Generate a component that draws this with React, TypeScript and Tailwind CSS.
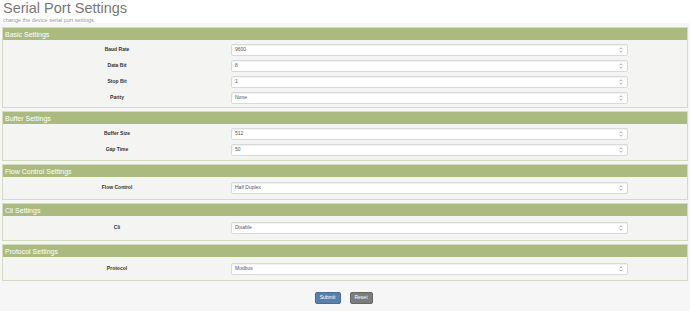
import React from "react";

type Field = { label: string; value: string };
type Section = { title: string; pad: string; fields: Field[] };

const SECTIONS: Section[] = [
  {
    title: "Basic Settings",
    pad: "pt-[4px] pb-[3px]",
    fields: [
      { label: "Baud Rate", value: "9600" },
      { label: "Data Bit", value: "8" },
      { label: "Stop Bit", value: "1" },
      { label: "Parity", value: "None" },
    ],
  },
  {
    title: "Buffer Settings",
    pad: "pt-[4px] pb-[4px]",
    fields: [
      { label: "Buffer Size", value: "512" },
      { label: "Gap Time", value: "50" },
    ],
  },
  { title: "Flow Control Settings", pad: "pt-[5px] pb-[5px]", fields: [{ label: "Flow Control", value: "Half Duplex" }] },
  { title: "Cli Settings", pad: "pt-[6px] pb-[6px]", fields: [{ label: "Cli", value: "Disable" }] },
  { title: "Protocol Settings", pad: "pt-[6px] pb-[5px]", fields: [{ label: "Protocol", value: "Modbus" }] },
];

function Arrows() {
  return (
    <svg width="4" height="6" viewBox="0 0 4 6" className="text-[#777]">
      <path d="M0.6 2.3 L2 0.8 L3.4 2.3" fill="none" stroke="currentColor" strokeWidth="0.6" />
      <path d="M0.6 3.7 L2 5.2 L3.4 3.7" fill="none" stroke="currentColor" strokeWidth="0.6" />
    </svg>
  );
}

function Row({ field }: { field: Field }) {
  return (
    <div className="flex items-center h-[12px]">
      <div className="w-[228px] text-center text-[5px] font-bold text-[#333]">{field.label}</div>
      <div className="w-[397px] h-[12px] bg-white border border-[#d9d9d9] rounded-[2px] flex items-center justify-between pl-[3px] pr-[4px] shadow-[inset_0_1px_1px_rgba(0,0,0,0.06)]">
        <span className="text-[5px] text-[#555]">{field.value}</span>
        <Arrows />
      </div>
    </div>
  );
}

function Panel({ section }: { section: Section }) {
  return (
    <div className="border border-[#d3dbc0] bg-[#f4f5f3]">
      <div className="h-[12px] bg-[#abbb80] flex items-center px-[2px] text-[7px] text-white leading-none">
        {section.title}
      </div>
      <div className={`flex flex-col gap-[4px] ${section.pad}`}>
        {section.fields.map((f) => (
          <Row key={f.label} field={f} />
        ))}
      </div>
    </div>
  );
}

export default function App() {
  return (
    <div
      className="w-[690px] h-[311px] overflow-hidden bg-white"
      style={{ fontFamily: '"Liberation Sans", Arial, sans-serif' }}
    >
      <div className="px-[3px] pt-[1px] h-[23px]">
        <div className="text-[14.5px] leading-[14px] text-[#777]">Serial Port Settings</div>
        <div className="text-[5.5px] leading-[6px] text-[#999] mt-[2px]">change the device serial port settings</div>
      </div>
      <div className="bg-[#f5f6f5] h-[288px] px-[2px] pt-[4px]">
        <div className="flex flex-col gap-[3px] w-[686px]">
          {SECTIONS.map((s) => (
            <Panel key={s.title} section={s} />
          ))}
        </div>
        <div className="flex justify-center gap-[9px] mt-[11px] pr-[3px]">
          <button className="w-[26px] h-[12px] bg-[#5b7fab] border border-[#4a6d97] rounded-[2px] text-[5px] text-white">
            Submit
          </button>
          <button className="w-[23px] h-[12px] bg-[#7c7c7c] border border-[#666] rounded-[2px] text-[5px] text-white">
            Reset
          </button>
        </div>
      </div>
    </div>
  );
}
